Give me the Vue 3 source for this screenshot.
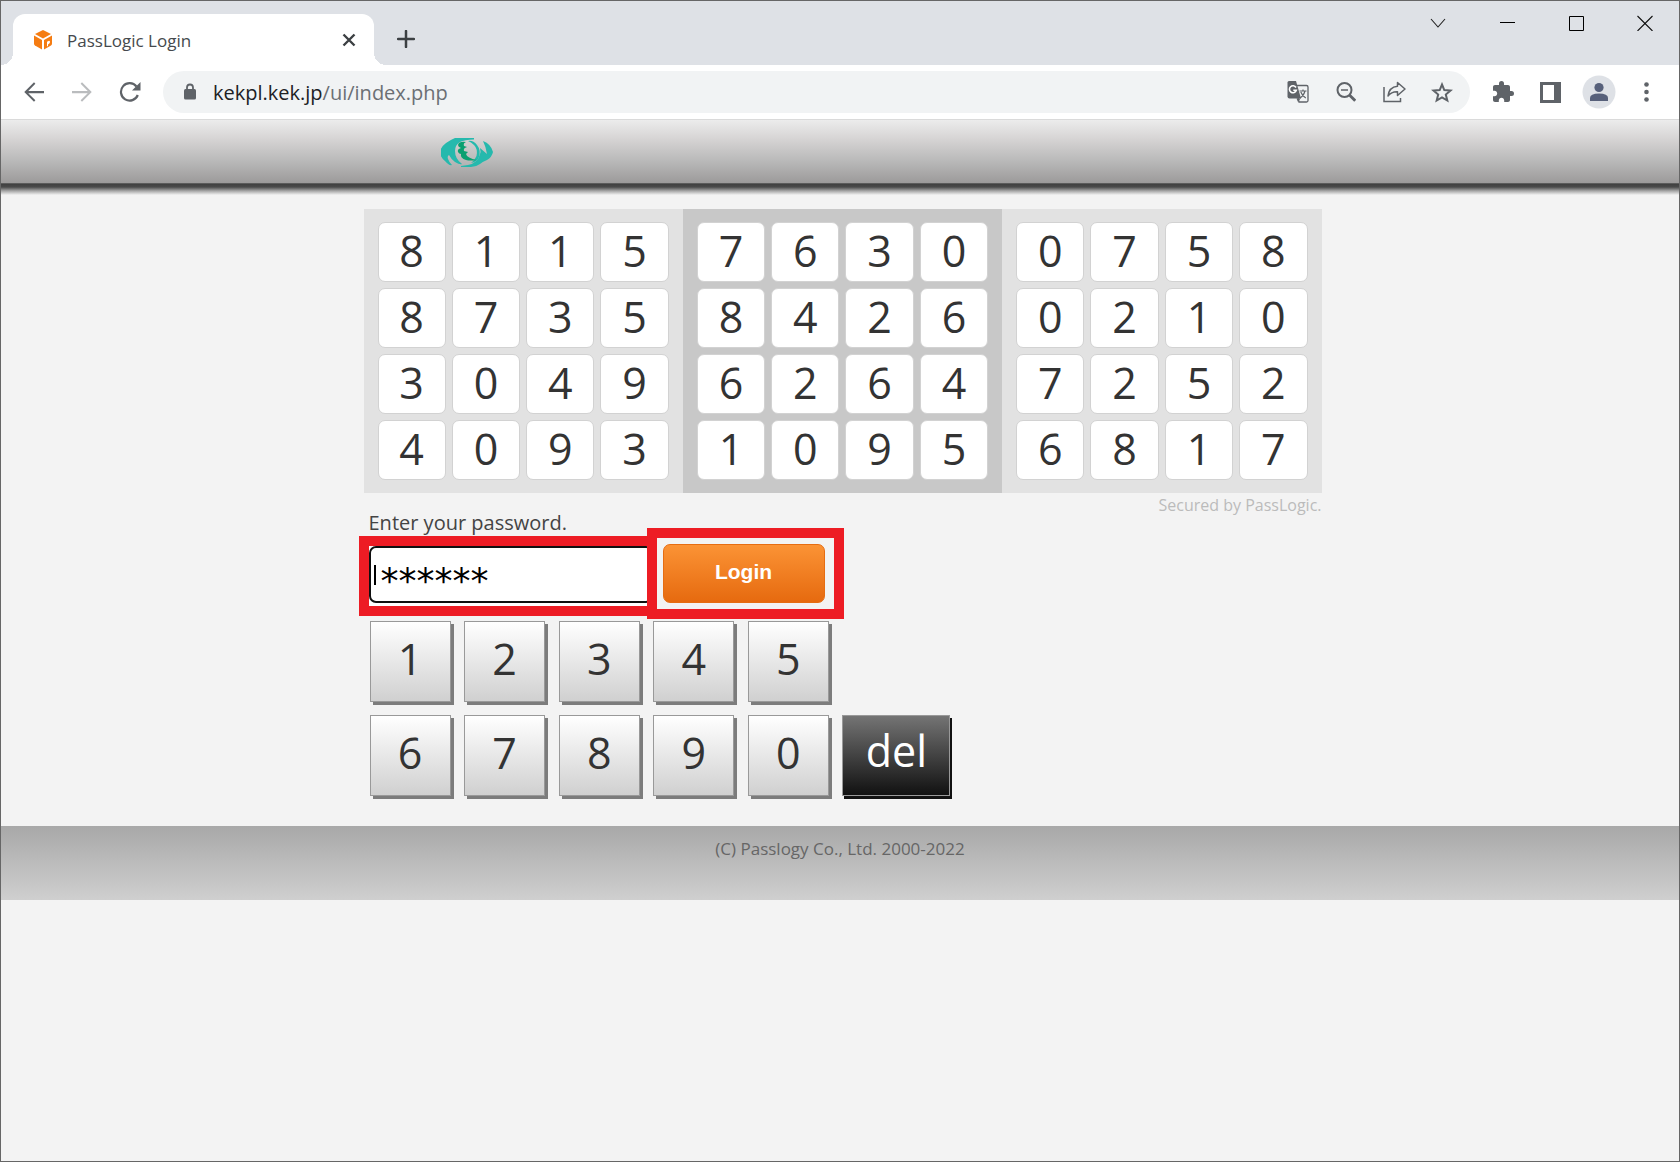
<script setup>
import { ref } from 'vue'

const panels = [
  ['8115', '8735', '3049', '4093'],
  ['7630', '8426', '6264', '1095'],
  ['0758', '0210', '7252', '6817'],
].map((rows) => rows.join('').split(''))

const keys = ['1', '2', '3', '4', '5', '6', '7', '8', '9', '0']
const password = ref('******')

function press() {
  password.value += '*'
}
function erase() {
  password.value = password.value.slice(0, -1)
}
</script>

<template>
  <div class="window">
    <header class="tab-strip">
      <div class="tab">
        <svg class="favicon" width="20" height="20" viewBox="0 0 20 20" fill="#f57c12">
          <path d="M10 0l8 4-8 4.600L2 4z" />
          <path d="M1 5.500l8 4.500v9.500l-7-4q-1-.6-1-2z" />
          <path fill-rule="evenodd" d="M19 5.500L11 10v9.500l7-4q1-.6 1-2zM14 11.800l2-1.100q1.300 0 1 1.500-.3 1.500-2 2.200V16l-1 .5z" />
        </svg>
        <span class="tab-title">PassLogic Login</span>
        <button class="plain tab-close" aria-label="Close tab">
          <svg width="14" height="14" viewBox="0 0 14 14" stroke="#3c4043" stroke-width="2.400"><path d="M1.500 1.500l11 11M12.500 1.500l-11 11" /></svg>
        </button>
      </div>
      <button class="plain new-tab" aria-label="New tab">
        <svg width="18" height="18" viewBox="0 0 18 18" stroke="#3c4043" stroke-width="2.500" stroke-linecap="round"><path d="M9 1v16M1 9h16" /></svg>
      </button>
      <div class="window-controls">
        <button class="plain" aria-label="Search tabs">
          <svg width="16" height="16" viewBox="0 0 16 16" fill="none" stroke="#222" stroke-width="1.100"><path d="M1 4l7 8 7-8" /></svg>
        </button>
        <button class="plain" aria-label="Minimize">
          <svg width="16" height="16" viewBox="0 0 16 16" fill="#000"><path d="M1 7h15v1H1z" /></svg>
        </button>
        <button class="plain" aria-label="Maximize">
          <svg width="16" height="16" viewBox="0 0 16 16" fill="none" stroke="#000"><path d="M1.500 1.500h14v14h-14z" /></svg>
        </button>
        <button class="plain" aria-label="Close">
          <svg width="16" height="16" viewBox="0 0 16 16" stroke="#111" stroke-width="1.100"><path d="M.5 1l15 15M15.500 1l-15 15" /></svg>
        </button>
      </div>
    </header>

    <nav class="toolbar">
      <button class="plain" aria-label="Back">
        <svg width="30" height="30" viewBox="0 0 24 24" fill="#5f6368"><path d="M20 11.100H7.400l5.700-5.700L12 4.200 4.200 12l7.800 7.800 1.100-1.200-5.700-5.700H20z" /></svg>
      </button>
      <button class="plain" aria-label="Forward">
        <svg width="30" height="30" viewBox="0 0 24 24" fill="#babcbe"><path d="M4 11.100h12.600l-5.700-5.700L12 4.200l7.800 7.800-7.800 7.800-1.100-1.200 5.700-5.700H4z" /></svg>
      </button>
      <button class="plain" aria-label="Reload">
        <svg width="22" height="20" viewBox="0 0 22 20"><path d="M18.800 13A8.700 8.700 0 1 1 17.500 4.500" fill="none" stroke="#5f6368" stroke-width="2.200" /><path d="M21.500 0v8.500H13z" fill="#5f6368" /></svg>
      </button>

      <div class="omnibox">
        <svg class="lock" width="14" height="18" viewBox="0 0 14 18"><rect x="1" y="6" width="12" height="10.500" rx="1.500" fill="#5f6368" /><path d="M4 7V4.500a3 3 0 0 1 6 0V7" fill="none" stroke="#5f6368" stroke-width="1.800" /></svg>
        <a class="url" href="#">kekpl.kek.jp<span>/ui/index.php</span></a>
        <button class="plain" aria-label="Translate this page">
          <svg width="22" height="22" viewBox="0 0 22 22">
            <path d="M8 4.500h11.500q1.500 0 1.500 1.500v13.500q0 1.500-1.500 1.500H12z" fill="#f1f3f4" stroke="#5f6368" stroke-width="1.300" />
            <path d="M2 0h7l5 17.500H2.500Q.5 17.500.5 15.500v-14Q.5 0 2 0z" fill="#5f6368" />
            <path d="M9.500 17.500h4L11 21z" fill="#5f6368" />
            <path d="M9 6.500A3.500 3.500 0 1 0 9.300 9.300H6.300" fill="none" stroke="#fff" stroke-width="1.600" />
            <path d="M12.500 10h7M16 8.500V10M18 10q-1.500 5-5 7M13.800 11q1.500 4 5 6" fill="none" stroke="#5f6368" stroke-width="1.200" />
          </svg>
        </button>
        <button class="plain" aria-label="Zoom out">
          <svg width="20" height="20" viewBox="0 0 20 20" fill="none" stroke="#5f6368"><circle cx="8.500" cy="8" r="7" stroke-width="2" /><path d="M13.200 12.700l6 6" stroke-width="2.800" /><path d="M5 8h7" stroke-width="1.500" /></svg>
        </button>
        <button class="plain" aria-label="Share">
          <svg width="24" height="22" viewBox="0 0 24 22" fill="none" stroke="#5f6368" stroke-width="1.500"><path d="M2 6v14.500h16.500V17" /><path d="M15.500 1.500L23 8l-7.500 6.500V10.800Q9.500 10.500 6 15 7 6 15.500 5.200z" stroke-linejoin="round" /></svg>
        </button>
        <button class="plain" aria-label="Bookmark this tab">
          <svg width="22" height="21" viewBox="0 0 22 21"><path d="M11 2.500l2.300 5.600 6.200.4-4.700 4 1.500 6-5.300-3.200-5.300 3.200 1.500-6-4.700-4 6.200-.4z" fill="none" stroke="#5f6368" stroke-width="2" /></svg>
        </button>
      </div>

      <button class="plain" aria-label="Extensions">
        <svg width="24" height="24" viewBox="0 0 24 24" fill="#5f6368"><path d="M20.500 11H19V7c0-1.100-.9-2-2-2h-4V3.500a2.500 2.500 0 0 0-5 0V5H4c-1.100 0-1.990.9-1.990 2v3.800H3.500c1.490 0 2.700 1.210 2.700 2.700s-1.210 2.700-2.700 2.700H2V20c0 1.100.9 2 2 2h3.800v-1.500c0-1.490 1.210-2.700 2.700-2.700s2.700 1.210 2.700 2.700V22H17c1.100 0 2-.9 2-2v-4h1.500a2.500 2.500 0 0 0 0-5z" /></svg>
      </button>
      <button class="plain" aria-label="Side panel">
        <svg width="22" height="22" viewBox="0 0 22 22"><path fill-rule="evenodd" d="M0 1h21v21H0zM3 4v15h11V4z" fill="#5f6368" /></svg>
      </button>
      <button class="plain" aria-label="Profile">
        <svg width="34" height="34" viewBox="0 0 34 34"><circle cx="17" cy="17" r="16.500" fill="#dee1e6" /><g fill="#57607a"><circle cx="17" cy="12.500" r="4.600" /><path d="M8 26v-3q0-4.500 9-4.500t9 4.500v3z" /></g></svg>
      </button>
      <button class="plain" aria-label="Menu">
        <svg width="6" height="22" viewBox="0 0 6 22" fill="#5f6368"><circle cx="2.500" cy="3.500" r="2.300" /><circle cx="2.500" cy="11" r="2.300" /><circle cx="2.500" cy="18.500" r="2.300" /></svg>
      </button>
    </nav>

    <div class="page">
      <div class="banner">
        <div class="container">
          <svg class="logo" width="54" height="30" viewBox="0 0 54 30">
            <g fill="#26b9ad">
              <path d="M14 0h19v1.500q-9 0-14 2.500-5 3-5 9 0 8 7 13-2 1-7-2-4-3-6-7-2 1-1 4 1 3 4 6-3 1-7-4-5-4-5-9 1-8 15-14z" />
              <path d="M27 3q5-1 9 4 4 5 2 12-2 5-8 6 4-3 5.500-7 1.500-7-2.500-11-3-3-6-4z" />
              <path d="M20 28l7-1q10-2 12-11 1-2 0-6l7 6q-1-7-4-13 8 3 10 11-1 5-6 8-5 2-7 4-4 3-9 3H20z" />
            </g>
            <path d="M25 4q-7-1-8 3 0 2 3 3-4 1-3 4 1 2 3 2-1 4 5 6 4 1 11 0-10-2-11-6l2-2-4-1q-1-3 3-4l-3-1q-1-3 2-4z" fill="#0aa070" />
          </svg>
        </div>
      </div>
      <div class="banner-edge"></div>

      <div class="content">
        <main class="container">
          <div class="panels">
            <div v-for="(digits, p) in panels" :key="p" class="panel">
              <span v-for="(digit, i) in digits" :key="i" class="cell">{{ digit }}</span>
            </div>
          </div>
          <p class="secured">Secured by PassLogic.</p>

          <form @submit.prevent>
            <label class="prompt" for="password">Enter your password.</label>
            <div class="entry">
              <div class="mark mark-field">
                <input id="password" v-model="password" type="text" autocomplete="off" />
                <span class="caret"></span>
              </div>
              <div class="mark mark-login">
                <button class="login" type="submit">Login</button>
              </div>
            </div>
            <div class="keypad">
              <button v-for="key in keys" :key="key" class="key" type="button" @click="press">{{ key }}</button>
              <button class="key del" type="button" @click="erase">del</button>
            </div>
          </form>
        </main>
      </div>

      <footer>(C) Passlogy Co., Ltd. 2000-2022</footer>
    </div>
  </div>
</template>

<style>
body {
  margin: 0;
  background: #f3f3f3;
}
</style>

<style scoped>
.window,
.window * {
  box-sizing: border-box;
}
.window {
  min-height: 100vh;
  border: 1px solid #666;
  background: #f3f3f3;
  color: #333;
  font-family: "Open Sans", "Noto Sans", sans-serif;
}
button {
  padding: 0;
  border: 0;
  font-family: inherit;
}
.plain {
  display: flex;
  align-items: center;
  justify-content: center;
  flex: none;
  background: none;
}

/* Tab strip */
.tab-strip {
  display: flex;
  height: 64px;
  padding-left: 12px;
  background: #dee1e6;
}
.tab {
  position: relative;
  display: flex;
  align-items: center;
  width: 361px;
  height: 51px;
  margin-top: 13px;
  padding: 0 18px 0 20px;
  border-radius: 12px 12px 0 0;
  background: #fff;
}
.tab::before,
.tab::after {
  content: "";
  position: absolute;
  bottom: 0;
  width: 12px;
  height: 12px;
}
.tab::before {
  right: 100%;
  background: radial-gradient(circle at 0 0, transparent 12px, #fff 12px);
}
.tab::after {
  left: 100%;
  background: radial-gradient(circle at 100% 0, transparent 12px, #fff 12px);
}
.tab-title {
  flex: 1;
  padding-top: 2px;
  margin-left: 14px;
  color: #45494d;
  font-size: 17px;
  line-height: 24px;
}
.new-tab {
  width: 36px;
  height: 36px;
  margin: 20px 0 0 14px;
}
.window-controls {
  display: flex;
  margin-left: auto;
}
.window-controls .plain {
  width: 69px;
  height: 44px;
}

/* Toolbar */
.toolbar {
  display: flex;
  align-items: center;
  height: 55px;
  padding: 0 8px 0 9px;
  border-bottom: 1px solid #dadada;
  background: #fff;
}
.toolbar .plain {
  width: 48px;
  height: 42px;
}
.omnibox {
  display: flex;
  align-items: center;
  flex: 1;
  height: 42px;
  margin: 0 9px;
  padding: 0 4px 0 20px;
  border-radius: 21px;
  background: #f1f3f4;
}
.lock {
  flex: none;
}
.url {
  flex: 1;
  padding-top: 2px;
  margin-left: 16px;
  color: #202124;
  font-size: 20px;
  line-height: 28px;
  text-decoration: none;
}
.url span {
  color: #6b6f74;
}

/* Page */
.container {
  width: 100%;
  max-width: 958px;
  margin: 0 auto;
}
.banner,
.content {
  padding-left: 5px;
}
.banner {
  display: flex;
  align-items: center;
  height: 63px;
  background: linear-gradient(#ececec, #d6d4d4 30%, #b9b9b9 65%, #9c9a9a);
}
.logo {
  display: block;
  margin: 2px 0 0 77px;
}
.banner-edge {
  height: 12px;
  background: linear-gradient(#777 0, #404040 1px, #4a4a4a 4px, #a8a8a8 8px, #f3f3f3 12px);
}
main {
  padding: 14px 0 30px;
}
.panels {
  display: grid;
  grid-template-columns: repeat(3, 1fr);
}
.panel {
  display: grid;
  grid-template-columns: repeat(4, 1fr);
  grid-auto-rows: 60px;
  gap: 6px;
  padding: 13px 14px;
  background: #e2e2e2;
}
.panel:nth-child(2) {
  background: #c8c8c8;
}
.cell {
  display: flex;
  align-items: center;
  justify-content: center;
  padding-bottom: 2px;
  border: 1px solid #d2d2d2;
  border-radius: 7px;
  background: #fff;
  font-size: 43px;
  line-height: 56px;
}
.secured {
  margin: 0;
  color: #bbb;
  font-size: 16px;
  line-height: 24px;
  text-align: right;
}
form {
  display: flex;
  flex-direction: column;
}
.prompt {
  align-self: flex-start;
  margin: -6px 0 0 5px;
  color: #444;
  font-size: 20px;
  line-height: 24px;
}
.entry {
  display: flex;
  align-items: flex-start;
  margin: -7px 0 0 -5px;
}
.mark {
  border: 10px solid #ed1c24;
}
.mark-field {
  position: relative;
  width: 298px;
  height: 80px;
  margin-top: 8px;
  background: #fff;
}
.mark-login {
  z-index: 1;
  width: 197px;
  height: 91px;
  margin-left: -10px;
  padding: 6px;
  background: #f3f3f3;
}
#password {
  display: block;
  width: 284px;
  height: 57px;
  padding: 12px 10px 0;
  border: 2px solid #101010;
  border-radius: 7px;
  outline: 0;
  background: #fff;
  color: #000;
  font-family: "DejaVu Sans", sans-serif;
  font-size: 36px;
}
.caret {
  position: absolute;
  top: 19px;
  left: 5px;
  width: 2px;
  height: 20px;
  background: #000;
}
.login {
  display: block;
  width: 162px;
  height: 59px;
  padding-bottom: 3px;
  border: 1px solid #e66d12;
  border-radius: 7px;
  background: linear-gradient(#fb9335, #e66a0f);
  color: #fff;
  font-family: "Liberation Sans", sans-serif;
  font-size: 21px;
  font-weight: bold;
}
.keypad {
  display: grid;
  grid-template-columns: repeat(5, 81px) 108px;
  grid-auto-rows: 81px;
  row-gap: 13px;
  justify-content: space-between;
  width: 581px;
  margin: 2px 0 0 6px;
}
.key {
  padding-bottom: 6px;
  border: 1px solid #999;
  background: linear-gradient(#fff, #d0d0d0);
  box-shadow: 3px 3px 0 #7c7c7c;
  color: #333;
  font-size: 43px;
  line-height: 60px;
}
.key:nth-child(6) {
  grid-column: 1;
}
.del {
  padding-bottom: 10px;
  background: linear-gradient(#747474, #111);
  box-shadow: 2px 3px 0 #111;
  color: #fff;
}
footer {
  height: 74px;
  padding-top: 11px;
  background: linear-gradient(#a8a8a8, #cfcfcf);
  color: #666;
  font-size: 17px;
  line-height: 24px;
  text-align: center;
}
</style>
